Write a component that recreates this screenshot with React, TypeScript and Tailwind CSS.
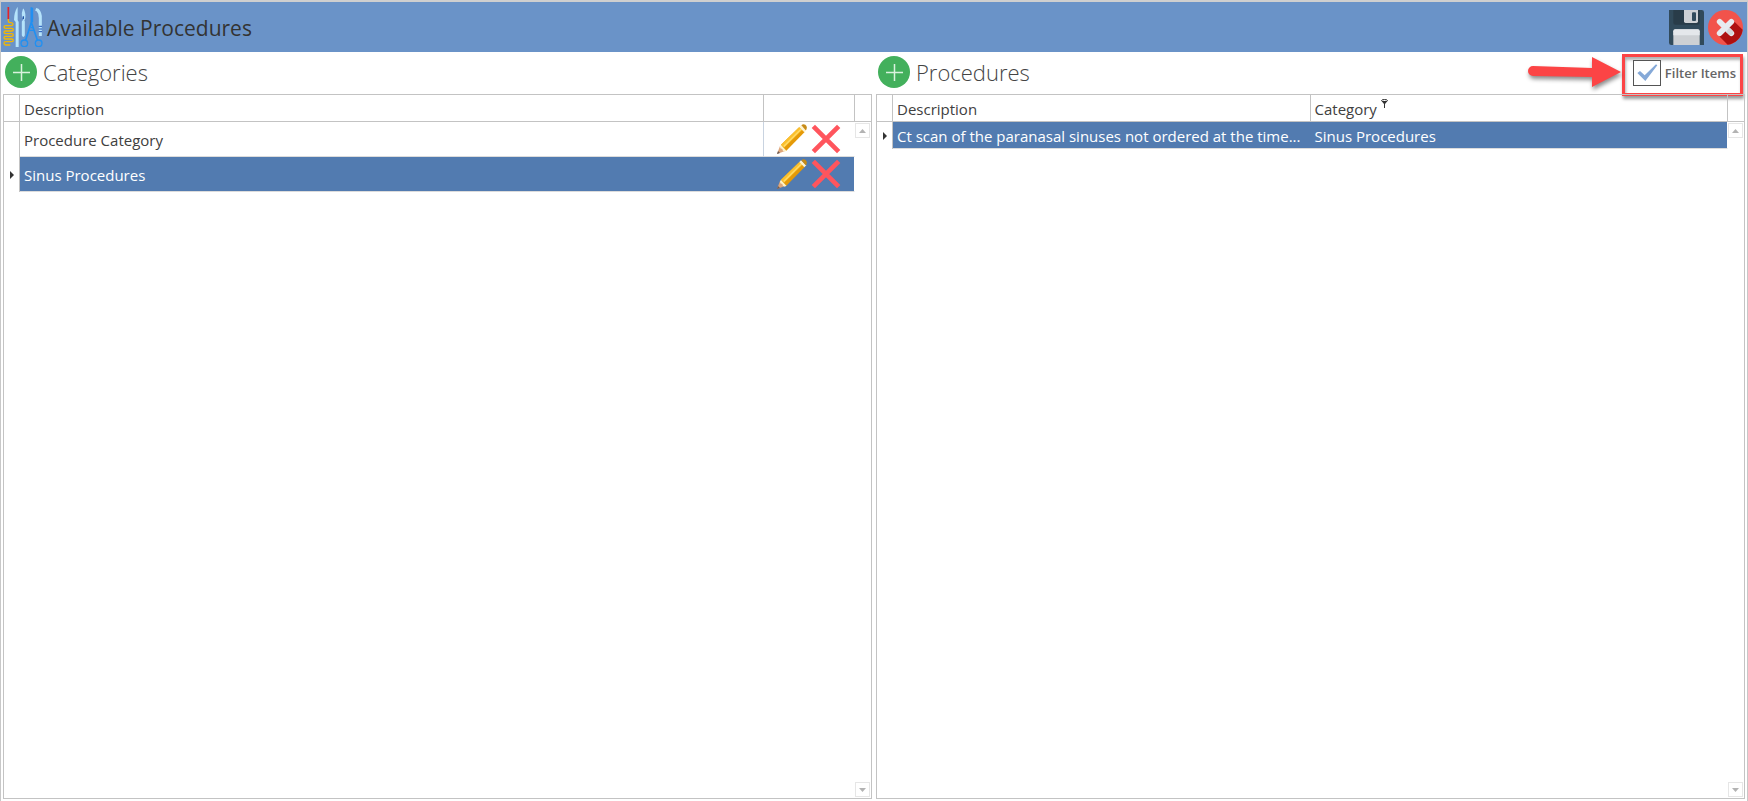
import { useState } from "react";
import type { ReactNode } from "react";

const categories = ["Procedure Category", "Sinus Procedures"];

const procedures = [
  {
    description: "Ct scan of the paranasal sinuses not ordered at the time...",
    category: "Sinus Procedures",
  },
];

const InstrumentsIcon = () => (
  <svg className="h-10 w-10 shrink-0" viewBox="0 0 120 120" fill="none">
    <path d="M16 0v36" stroke="#e3222b" strokeWidth="5" />
    <path
      d="M16 36v7q0 4 8 4q6 1 6 5q0 4-6 4H8q-5 0-5 4t5 4h18q5 0 5 4t-5 4H8q-5 0-5 4t5 4h18q5 0 5 4t-5 4H8q-5 0-5 4t5 4h18q5 0 5 4t-5 4H8q-5 0-5 5t5 5h14"
      stroke="#f5b800"
      strokeWidth="4"
    />
    <path d="M43 1q-10 16-10 38l5 6v75h9V45l-3-6V1z" fill="#b5e3fb" />
    <path d="M60 5q-5 12-3 24l4 8-2 6v44q2 6 4 0V43l3-6q4-16-4-32z" fill="#b5e3fb" />
    <path d="M61 44v40" stroke="#b5e3fb" strokeWidth="9" strokeLinecap="round" />
    <path d="M59 28h4v8h-4z" fill="#2456a8" />
    <path d="M98 7l6 2q9 10 8 25v53" stroke="#b5e3fb" strokeWidth="9" />
    <path d="M107 58h10M107 66h10M107 74h10" stroke="#2456b8" strokeWidth="3" />
    <path
      d="M85 1v45l-17 53M85 1v45l18 53M88 2v44"
      stroke="#2090f2"
      strokeWidth="5"
    />
    <path d="M83 62h8M80 70h13" stroke="#2090f2" strokeWidth="4" />
    <circle cx="64" cy="109" r="10" stroke="#2090f2" strokeWidth="4" />
    <circle cx="107" cy="109" r="10" stroke="#2090f2" strokeWidth="4" />
  </svg>
);

const SaveIcon = () => (
  <svg className="h-[35px] w-[35px]" viewBox="0 0 105 105">
    <path d="M0 0h98q7 0 7 7v98H7q-7 0-7-7z" fill="#314a5b" />
    <path d="M13 0h79v38q0 6-6 6H19q-6 0-6-6z" fill="#293c49" />
    <path d="M45 0h42v34q0 5-5 5H50q-5 0-5-5z" fill="#cdd0d4" />
    <rect x="69" y="7" width="12" height="26" rx="3" fill="#314a5b" />
    <path d="M13 105V64q0-6 6-6h67q6 0 6 6v41z" fill="#cdd0d4" />
    <path d="M13 76V64q0-6 6-6h67q6 0 6 6v12z" fill="#e4e7eb" />
  </svg>
);

const CloseIcon = () => (
  <svg className="h-[35px] w-[35px]" viewBox="0 0 105 105">
    <circle cx="52.5" cy="52.5" r="52.5" fill="#f2534b" />
    <path
      d="M74 30l30 29A52.5 52.5 0 0 1 59 104.500L30 75l23-23z"
      fill="#ae1010"
    />
    <path
      d="M35 35l35 35M70 35L35 70"
      stroke="#e7ebf0"
      strokeWidth="17"
      strokeLinecap="round"
    />
    <path d="M54 66l11 9q7 2 11-5 1-5-4-9l-8-8z" fill="#d3d6da" />
  </svg>
);

const PencilIcon = () => (
  <svg className="h-[30px] w-[30px]" viewBox="0 0 90 90">
    <path d="M0 90L9 66 24 81z" fill="#dfa679" />
    <path d="M0 90l3-9 6 6z" fill="#6b5a55" />
    <path d="M9 66l4-4 16 17-5 4-6-2-2-6-6-2z" fill="#fff3c8" />
    <path d="M12 62L67 9l16 15-55 56z" fill="#e59a08" />
    <path d="M12 62L67 9l9 8-55 54z" fill="#fbc02d" />
    <path d="M19 65l53-52 3 3-53 53z" fill="#ffda66" />
    <path d="M67 9l5-5 16 15-6 6z" fill="#fff3d0" />
    <path d="M73 4q5-6 12-2 7 6 3 15l-2 2z" fill="#c78b16" />
  </svg>
);

const DeleteIcon = () => (
  <svg className="h-[30px] w-[30px]" viewBox="0 0 90 90">
    <path d="M7 7l76 76M83 7L7 83" stroke="#ff555d" strokeWidth="14" />
  </svg>
);

const AddIcon = () => (
  <svg className="h-8 w-8" viewBox="0 0 32 32">
    <circle cx="16" cy="16" r="16" fill="#43b05c" />
    <path d="M8 16.500h17M16.500 8v17" stroke="#d9f2de" strokeWidth="1.500" />
  </svg>
);

const RowMarker = () => (
  <svg className="ml-auto mr-[5px] h-2 w-1" viewBox="0 0 4 8">
    <path d="M0 0l4 4-4 4z" fill="#333" />
  </svg>
);

const Arrow = () => (
  <svg
    className="absolute -top-1 right-full mr-1 h-10 w-[102px] overflow-visible drop-shadow-[1px_3px_2px_rgba(0,0,0,0.450)]"
    viewBox="0 0 102 40"
  >
    <path d="M14 13l59 2V4l29 15-29 15V24l-59-1a5 5 0 0 1 0-10z" fill="#fc4445" />
  </svg>
);

const ScrollButtons = () => (
  <div className="absolute bottom-0 right-0 top-[27px] flex w-4 flex-col justify-between py-px">
    <button
      aria-label="Scroll up"
      className="flex h-[15px] w-[15px] items-center justify-center border border-[#e6e6e6] bg-white"
    >
      <svg className="h-1 w-[7px]" viewBox="0 0 7 4">
        <path d="M0 4l3.500-4L7 4z" fill="#b3b3b3" />
      </svg>
    </button>
    <button
      aria-label="Scroll down"
      className="flex h-[15px] w-[15px] items-center justify-center border border-[#e6e6e6] bg-white"
    >
      <svg className="h-1 w-[7px]" viewBox="0 0 7 4">
        <path d="M0 0l3.500 4L7 0z" fill="#b3b3b3" />
      </svg>
    </button>
  </div>
);

type PanelProps = {
  title: string;
  action?: ReactNode;
  children: ReactNode;
};

const Panel = ({ title, action, children }: PanelProps) => (
  <section className="flex min-w-0 flex-1 flex-col">
    <div className="flex h-[42px] justify-between">
      <div className="flex items-center gap-1.5 pb-0.5 pl-0.5">
        <button aria-label={`Add to ${title}`}>
          <AddIcon />
        </button>
        <h2 className="text-[22px] font-light leading-8 text-[#444]">{title}</h2>
      </div>
      {action}
    </div>
    <div className="relative flex-1 border border-[#c3c3c3]">
      {children}
      <ScrollButtons />
    </div>
  </section>
);

const th =
  "h-[27px] border-b border-r border-[#c3c3c3] px-1 pb-0 pt-0.5 text-left font-normal";

const App = () => {
  const [filterItems, setFilterItems] = useState(true);
  const [selected, setSelected] = useState("Sinus Procedures");

  return (
    <div className="flex min-h-screen flex-col border-x border-t-2 border-x-[#c8c8c8] border-t-[#cfcfcf] bg-white font-['Open_Sans',sans-serif] text-[15px] leading-5 text-[#404040]">
      <header className="flex h-[50px] items-center justify-between bg-[#6a93c8] pl-0.5 pr-1">
        <div className="flex items-center gap-1">
          <InstrumentsIcon />
          <h1 className="pt-0.5 text-[21px] leading-8 text-[#333]">
            Available Procedures
          </h1>
        </div>
        <div className="flex items-center gap-1">
          <button aria-label="Save">
            <SaveIcon />
          </button>
          <button aria-label="Close">
            <CloseIcon />
          </button>
        </div>
      </header>

      <main className="flex flex-1 gap-1 px-0.5 pb-0.5">
        <Panel title="Categories">
          <table className="w-full table-fixed border-separate border-spacing-0">
            <thead>
              <tr>
                <th className={`${th} w-4`}></th>
                <th className={th}>Description</th>
                <th className={`${th} w-[91px]`}></th>
                <th className="w-4 border-b border-[#c3c3c3]"></th>
              </tr>
            </thead>
            <tbody>
              {categories.map((name) => {
                const active = name === selected;
                return (
                  <tr key={name} onClick={() => setSelected(name)}>
                    <td className="h-[35px] border-r border-[#c3c3c3] p-0">
                      {active && <RowMarker />}
                    </td>
                    <td
                      className={
                        active
                          ? "border-b border-[#dcdcdc] bg-[#527bb0] px-1 pb-0 pt-0.5 text-white"
                          : "border-b border-r border-b-[#dcdcdc] border-r-[#c9d3e0] px-1 pb-0 pt-0.5"
                      }
                    >
                      {name}
                    </td>
                    <td
                      className={
                        active
                          ? "border-b border-r border-b-[#dcdcdc] border-r-white bg-[#527bb0] p-0"
                          : "border-b border-r border-b-[#dcdcdc] border-r-white p-0"
                      }
                    >
                      <div className="flex items-center gap-1 pl-[13px]">
                        <button aria-label={`Edit ${name}`}>
                          <PencilIcon />
                        </button>
                        <button aria-label={`Delete ${name}`}>
                          <DeleteIcon />
                        </button>
                      </div>
                    </td>
                    <td></td>
                  </tr>
                );
              })}
            </tbody>
          </table>
        </Panel>

        <Panel
          title="Procedures"
          action={
            <div className="relative mr-0.5 mt-0.5 flex h-[42px] items-center border-[3px] border-[#fc4445] pb-[5px] pl-2 pr-1 shadow-[1px_3px_3px_rgba(0,0,0,0.400),inset_1px_3px_3px_rgba(0,0,0,0.300)]">
              <Arrow />
              <label className="flex items-center gap-1 text-[13px] font-semibold text-[#666]">
                <span className="relative flex h-[26px] w-7">
                  <input
                    type="checkbox"
                    checked={filterItems}
                    onChange={(e) => setFilterItems(e.target.checked)}
                    className="h-full w-full appearance-none border border-[#555] bg-white"
                  />
                  {filterItems && (
                    <svg
                      className="pointer-events-none absolute inset-0 h-full w-full"
                      viewBox="0 0 84 78"
                    >
                      <path d="M13 39l8-6 14 13 34-33 4 3-36 47z" fill="#85a9d8" />
                    </svg>
                  )}
                </span>
                Filter Items
              </label>
            </div>
          }
        >
          <table className="w-full table-fixed border-separate border-spacing-0">
            <thead>
              <tr>
                <th className={`${th} w-4`}></th>
                <th className={th}>Description</th>
                <th className={th}>
                  <span className="flex items-start gap-1">
                    Category
                    <svg className="h-[9px] w-[7px]" viewBox="0 0 7 9">
                      <ellipse
                        cx="3.500"
                        cy="1.500"
                        rx="3"
                        ry="1"
                        fill="none"
                        stroke="#333"
                      />
                      <path d="M.5 2l2.500 3v4h1V5l2.500-3z" fill="#333" />
                    </svg>
                  </span>
                </th>
                <th className="w-4 border-b border-[#c3c3c3]"></th>
              </tr>
            </thead>
            <tbody>
              {procedures.map((item) => (
                <tr key={item.description}>
                  <td className="h-[27px] border-r border-[#c3c3c3] p-0">
                    <RowMarker />
                  </td>
                  <td className="truncate border-b border-[#dcdcdc] bg-[#527bb0] pb-0 pl-1 pr-0 pt-0.5 text-white">
                    {item.description}
                  </td>
                  <td className="border-b border-r border-b-[#dcdcdc] border-r-white bg-[#527bb0] px-1 pb-0 pt-0.5 text-white">
                    {item.category}
                  </td>
                  <td></td>
                </tr>
              ))}
            </tbody>
          </table>
        </Panel>
      </main>
    </div>
  );
};

export default App;
